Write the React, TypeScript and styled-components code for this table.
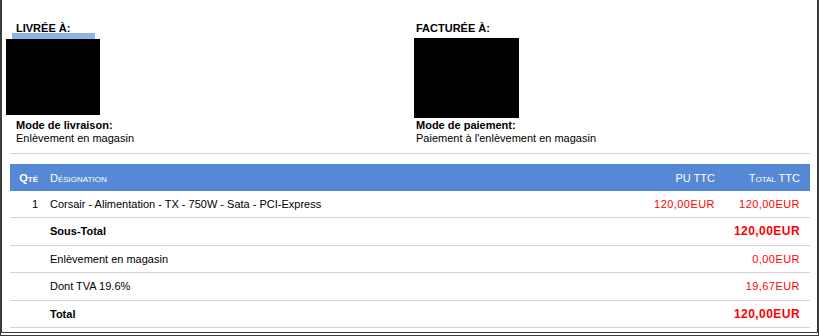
import * as React from 'react';
import styled, { createGlobalStyle } from 'styled-components';

const GlobalStyle = createGlobalStyle`
  html, body {
    margin: 0;
    padding: 0;
    background: #fff;
  }
  body {
    font-family: Tahoma, "Liberation Sans", Arial, sans-serif;
    font-size: 11px;
    color: #000;
  }
`;

const Frame = styled.div`
  box-sizing: border-box;
  width: 819px;
  height: 336px;
  padding: 22px 7px 0 8px;
  border-left: 2px solid #3c3c3c;
  border-right: 2px solid #3c3c3c;
  border-bottom: 4px double #3c3c3c;
  background: #fff;
`;

const Addresses = styled.div`
  display: grid;
  grid-template-columns: 400px 400px;
  padding-bottom: 8px;
  border-bottom: 1px solid #d4d4d4;
`;

const AddressCol = styled.div`
  padding-left: 6px;
  line-height: 13px;
`;

const Heading = styled.div`
  font-weight: bold;
  text-transform: uppercase;
`;

const AddressBody = styled.div`
  position: relative;
  height: 84px;
`;

// masked-out address lines
const Mask = styled.div<{ $left: number; $top: number; $w: number; $h: number }>`
  position: absolute;
  left: ${(p) => p.$left}px;
  top: ${(p) => p.$top}px;
  width: ${(p) => p.$w}px;
  height: ${(p) => p.$h}px;
  background: #000;
`;

const Selection = styled.div`
  position: absolute;
  left: -4px;
  top: -2px;
  width: 83px;
  height: 6px;
  background: #8fb3e6;
`;

const Label = styled.div`
  font-weight: bold;
`;

const Value = styled.div``;

const Table = styled.table`
  width: 800px;
  margin-top: 10px;
  border-collapse: collapse;
  border-spacing: 0;
`;

const HeadCell = styled.th<{ $align?: string; $bold?: boolean; $padRight?: number }>`
  height: 27px;
  padding: 0 ${(p) => p.$padRight ?? 6}px 0 6px;
  background: #5589d6;
  color: #fff;
  font-weight: ${(p) => (p.$bold ? 'bold' : 'normal')};
  font-variant: small-caps;
  text-align: ${(p) => p.$align || 'left'};
  white-space: nowrap;
`;

const Row = styled.tr`
  border-bottom: 1px solid #d4d4d4;
`;

const Cell = styled.td<{
  $align?: string;
  $bold?: boolean;
  $red?: boolean;
  $w?: number;
  $h: number;
  $padRight?: number;
}>`
  height: ${(p) => p.$h}px;
  padding: 0 ${(p) => p.$padRight ?? 6}px 0 6px;
  width: ${(p) => (p.$w ? `${p.$w}px` : 'auto')};
  text-align: ${(p) => p.$align || 'left'};
  font-weight: ${(p) => (p.$bold ? 'bold' : 'normal')};
  font-size: ${(p) => (p.$bold && p.$red ? '12px' : '11px')};
  letter-spacing: ${(p) => (p.$red ? '0.45px' : 'normal')};
  color: ${(p) => (p.$red ? '#ff0000' : '#000')};
  white-space: nowrap;
`;

interface Line {
  qty?: string;
  label: string;
  unit?: string;
  total: string;
  bold?: boolean;
}

const lines: Line[] = [
  { qty: '1', label: 'Corsair - Alimentation - TX - 750W - Sata - PCI-Express', unit: '120,00EUR', total: '120,00EUR' },
  { label: 'Sous-Total', total: '120,00EUR', bold: true },
  { label: 'Enlèvement en magasin', total: '0,00EUR' },
  { label: 'Dont TVA 19.6%', total: '19,67EUR' },
  { label: 'Total', total: '120,00EUR', bold: true },
];

export default function App() {
  return (
    <>
      <GlobalStyle />
      <Frame>
        <Addresses>
          <AddressCol>
            <Heading>Livrée à:</Heading>
            <AddressBody>
              <Selection />
              <Mask $left={-10} $top={4} $w={94} $h={76} />
            </AddressBody>
            <Label>Mode de livraison:</Label>
            <Value>Enlèvement en magasin</Value>
          </AddressCol>
          <AddressCol>
            <Heading>Facturée à:</Heading>
            <AddressBody>
              <Mask $left={-2} $top={3} $w={105} $h={80} />
            </AddressBody>
            <Label>Mode de paiement:</Label>
            <Value>Paiement à l'enlèvement en magasin</Value>
          </AddressCol>
        </Addresses>

        <Table>
          <thead>
            <tr>
              <HeadCell $bold $align="right" style={{ width: 22 }}>Qté</HeadCell>
              <HeadCell>Désignation</HeadCell>
              <HeadCell $align="right" $padRight={10}>PU TTC</HeadCell>
              <HeadCell $align="right" $padRight={10}>Total TTC</HeadCell>
            </tr>
          </thead>
          <tbody>
            {lines.map((l, i) => {
              const h = i === 0 ? 26 : 26.5;
              return (
                <Row key={i}>
                  <Cell $h={h} $align="right">{l.qty}</Cell>
                  <Cell $h={h} $bold={l.bold}>{l.label}</Cell>
                  <Cell $h={h} $align="right" $red $w={72} $padRight={10}>{l.unit}</Cell>
                  <Cell $h={h} $align="right" $red $bold={l.bold} $w={69} $padRight={10}>
                    {l.total}
                  </Cell>
                </Row>
              );
            })}
          </tbody>
        </Table>
      </Frame>
    </>
  );
}
